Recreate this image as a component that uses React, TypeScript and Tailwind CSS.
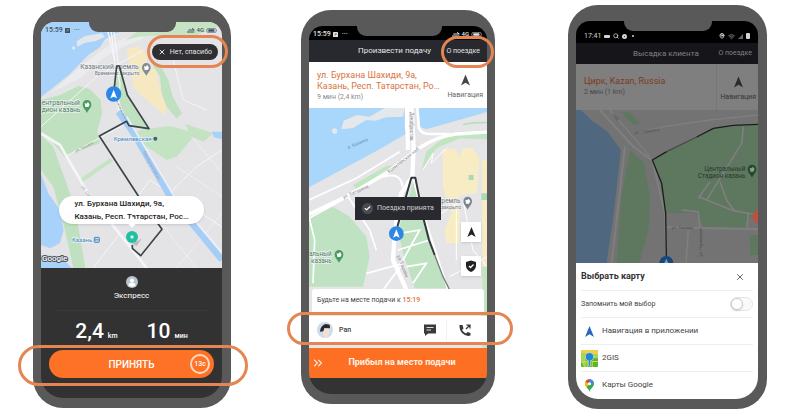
import type { ReactNode } from "react";
import { Check, X, Search, Wifi, MapPin, ChevronsRight } from "lucide-react";

const mapLabel = { fontFamily: "Roboto, 'Liberation Sans', sans-serif" };

function Phone({ className, notch, children, marks }: { className: string; notch: string; children: ReactNode; marks?: ReactNode }) {
  return (
    <section className={`relative shrink-0 rounded-[30px] bg-[#595959] pt-4 pb-[10px] pl-2 ${className}`}>
      <div className="relative flex flex-col overflow-hidden rounded-t-[14px] rounded-b-[22px]">
        {children}
        <div className={`absolute top-0 h-[10px] rounded-b-[9px] bg-[#595959] ${notch}`} />
      </div>
      {marks}
    </section>
  );
}

function Highlight({ className }: { className: string }) {
  return <div className={`pointer-events-none absolute rounded-full border-[3px] border-[#e58652] ${className}`} />;
}

function Arrow({ className }: { className: string }) {
  return (
    <svg viewBox="0 0 20 24" className={className} fill="currentColor" aria-hidden="true">
      <path d="M10 0 L20 24 L10 18 L0 24 Z" />
    </svg>
  );
}

function XiaomiStatus({ className }: { className: string }) {
  return (
    <div className={`relative flex h-[14px] items-center justify-between px-1 pt-[2px] text-[7px] leading-none font-medium ${className}`}>
      <span className="flex items-center gap-[2px]">
        15:59
        <svg viewBox="0 0 10 10" className="size-[5px]" aria-hidden="true">
          <rect width="10" height="10" rx="1" fill="currentColor" />
          <path d="M4 8V3h3v2H4" stroke="#888" strokeWidth="1.5" fill="none" />
        </svg>
        <span className="pl-[2px]">···</span>
      </span>
      <span className="flex items-center gap-[2px] text-[6px]">
        <svg viewBox="0 0 24 15" className="h-[5px] w-2" stroke="currentColor" strokeWidth="3" fill="none" aria-hidden="true">
          <path d="M0 12H22M4 6H22M15 1L22 6" />
        </svg>
        4G
        <svg viewBox="0 0 36 16" className="h-[5px] w-3" aria-hidden="true">
          <rect x="1" y="1" width="31" height="14" rx="7" fill="none" stroke="currentColor" strokeWidth="2" />
          <rect x="6" y="4" width="20" height="8" rx="2" fill="currentColor" />
        </svg>
      </span>
    </div>
  );
}

function MapPinIcon({ x, y, color, fill = "#fff" }: { x: number; y: number; color: string; fill?: string }) {
  return (
    <g transform={`translate(${x} ${y})`}>
      <path d="M0 22C-4 12 -13 8 -13 -4A13 13 0 0 1 13 -4C13 8 4 12 0 22Z" fill={color} />
      <path d="M-7 -8L-2 -6L3 -11L8 -3L4 4H-5Z" fill={fill} />
    </g>
  );
}

function OfferMap() {
  return (
    <svg viewBox="93 66 543 738" preserveAspectRatio="xMidYMid slice" className="absolute inset-0 size-full" style={mapLabel} aria-hidden="true">
      <rect x="93" y="66" width="543" height="738" fill="#e4e4e7" />
      <path d="M93 66H410L370 82L318 100L285 118L270 142L235 165L180 222L93 292Z" fill="#a9d2fa" />
      <path d="M202 140L200 124L225 108L275 100L285 110L255 124L225 128Z" fill="#e4e7ea" />
      <circle cx="191" cy="144" r="5" fill="#e4e7ea" />
      <path d="M120 280L200 210L275 150L330 120L400 100L400 115L340 140L280 175L210 235Z" fill="#ececef" />
      <path d="M345 122Q400 100 470 110L560 105L636 75V66H500L380 96Z" fill="#c6e4c4" />
      <path d="M93 300L150 285L205 258L240 268L272 300L276 340L262 395L270 430L180 462L165 472L130 430L93 400Z" fill="#bfe1bf" />
      <path d="M320 200L328 198L352 285L416 385L357 376L330 310L315 260Z" fill="#bfe1bf" />
      <path d="M350 145L385 140L412 165L408 200L440 210L445 250L470 325L462 345L440 325L400 290L372 265L360 200Z" fill="#f6e9c2" />
      <path d="M425 190L450 195L475 240L488 290L516 340L500 356L470 320L455 280L450 230Z" fill="#bfe1bf" />
      <path d="M400 388L480 378L560 400L500 470L470 480L395 430L370 400Z" fill="#c3e3c2" />
      <path d="M525 372L610 400L580 425L545 410Z" fill="#c3e3c2" />
      <path d="M605 395H636V418L612 412Z" fill="#a9d2fa" />
      <path d="M93 405L130 440L155 510L182 585L205 680L226 804H190L165 690L130 560L93 510Z" fill="#bfe1bf" />
      <path d="M93 522L115 580L150 630L161 690L150 730L120 745L93 735Z" fill="#a9d2fa" />
      <path d="M93 765L150 768L185 804H93Z" fill="#a9d2fa" />
      <path d="M205 540L300 475L310 483L215 548Z" fill="#c6e4c4" />
      <g stroke="#f5f5f8" fill="none">
        <path d="M93 400L150 435L240 590L300 665L410 804" strokeWidth="8" />
        <path d="M287 66L330 250L325 330M300 66L318 210M308 66L330 230" strokeWidth="4" />
        <path d="M165 470L340 375M385 587L420 540L635 680M470 588L560 500L636 450M230 590L330 700L250 804M93 380L260 230L400 150" strokeWidth="3" />
        <path d="M430 640L560 804M500 500L636 590M545 410L636 520M500 804L636 640" strokeWidth="2" />
        <path d="M480 140L520 300L590 330" strokeWidth="3" />
      </g>
      <path d="M325 335L372 402L480 590L636 780" stroke="#a6cdf6" strokeWidth="19" fill="none" />
      <path d="M350 350L392 420L490 585L636 758" stroke="#e6f1fb" strokeWidth="5" fill="none" />
      <path d="M320 300L335 335L350 365" stroke="#8b96a1" strokeWidth="3" strokeDasharray="7 4" fill="none" />
      <g fontSize="17" fill="#9a9a9f">
        <text transform="translate(198 458) rotate(-27)" fontSize="12">ул. Ташаяк</text>
        <text transform="translate(214 560) rotate(55)" fontSize="13">ул. Саид</text>
        <text transform="translate(398 455) rotate(61)" fontSize="12">Левобулачная ул.</text>
      </g>
      <g stroke="#eef0f2" strokeWidth="4" paintOrder="stroke" fill="#71777e" fontSize="20">
        <text x="386" y="207" textAnchor="end">Казанский кремль</text>
        <text x="388" y="224" textAnchor="end" fontSize="15">Временно закрыто</text>
        <g fill="#477d58">
          <text x="95" y="316">ентральный</text>
          <text x="95" y="337">дион казань</text>
        </g>
        <g fill="#3c8ac0">
          <text x="311" y="424" fontSize="18">Кремлевская</text>
          <text x="186" y="727" fontSize="18">Казань</text>
        </g>
      </g>
      <circle cx="436" cy="416" r="6" fill="#3f6272" />
      <rect x="253" y="712" width="15" height="15" rx="2" fill="none" stroke="#3c8ac0" strokeWidth="3" />
      <path d="M257 724V716L261 721L264 716V724" fill="none" stroke="#3c8ac0" strokeWidth="2" />
      <MapPinIcon x={409} y={206} color="#858d94" />
      <MapPinIcon x={231} y={317} color="#4a9862" />
      <path d="M313 262L320 198H328L352 285L417 386L357 377L350 364L268 408L385 588L456 688L392 767L367 745V735" stroke="#3d4348" strokeWidth="5" strokeLinejoin="round" fill="none" />
      <circle cx="311" cy="282" r="23" fill="#2b87e6" />
      <path d="M311 269L321 295L311 290L301 295Z" fill="#fff" />
      <path d="M366 731L395 716L380 738Z" fill="#b8bbbf" />
      <circle cx="366" cy="711" r="18" fill="#22bfa2" />
      <circle cx="366" cy="711" r="5" fill="#d7f7ee" />
      <text x="96" y="784" fontSize="24" fontWeight="500" fill="#fff" stroke="#4f545a" strokeWidth="6" paintOrder="stroke">Google</text>
    </svg>
  );
}

function PickupMap() {
  return (
    <svg viewBox="118 324 534 720" preserveAspectRatio="xMidYMin slice" className="absolute inset-0 size-full" style={mapLabel} aria-hidden="true">
      <rect x="118" y="324" width="534" height="720" fill="#e5e5e8" />
      <path d="M118 324H412V400L330 448L118 562Z" fill="#a9d6fb" />
      <path d="M445 324H652V336L560 362L470 388L450 380Z" fill="#a9d6fb" />
      <path d="M215 388L222 362L262 345L300 350L345 324H405L400 350L350 352L318 362L290 360L250 384Z" fill="#e5e8ea" />
      <circle cx="195" cy="393" r="8" fill="#e5e8ea" />
      <path d="M458 500L470 455L520 415L570 395L652 390V418L570 415L500 445L455 510Z" fill="#c1e4c1" />
      <path d="M250 555L350 498L372 495L262 570Z" fill="#c1e4c1" />
      <path d="M118 655L190 620L240 650L290 710L300 770L280 860H118Z" fill="#bfe3c2" />
      <path d="M430 545L405 640L385 690L400 760L435 865H540L490 760L455 640Z" fill="#bfe3c2" />
      <path d="M520 448L555 445L570 470L580 445L605 442L630 475L622 580L570 585L570 730H530L525 690L545 640L520 560Z" fill="#f7ecc3" />
      <path d="M636 480H652V1044H640Z" fill="#f7ecc3" />
      <path d="M635 580H652V600H635ZM597 525H612V540H597Z" fill="#abd9b5" />
      <path d="M638 800H652V1044H638Z" fill="#c1e4c1" />
      <g stroke="#fff" fill="none">
        <path d="M118 643L230 590L350 520L440 450Q500 408 560 402L652 396" strokeWidth="11" />
        <path d="M118 600L260 535L390 455M118 655L235 590L300 690L320 750" strokeWidth="5" />
        <path d="M443 324L448 385Q455 402 480 402H540" strokeWidth="8" fill="none" />
        <path d="M412 324V380Q415 400 415 450M425 324L432 440L428 530L395 580L375 700L370 780L415 880" strokeWidth="13" />
        <path d="M340 530Q395 515 398 560M430 530L450 610L490 730L545 900" strokeWidth="6" />
        <path d="M118 650L135 720L130 850M290 820L400 790L340 870M390 700L450 690L400 780M385 750L480 720M410 800L470 790L430 850" strokeWidth="5" />
        <path d="M460 510L490 460L485 490L530 445M580 600L610 750L652 800M500 650L560 610L560 780M540 830L652 770" strokeWidth="3" />
      </g>
      <path d="M580 374Q610 366 652 368" stroke="#b4dcb5" strokeWidth="4" fill="none" />
      <g fill="#85878b" fontSize="14">
        <text transform="translate(236 446) rotate(-22)" fontSize="13" fill="#6d90ad">р. Казанка</text>
        <text transform="translate(222 597) rotate(-25)">ул. Батурина</text>
        <text transform="translate(358 520) rotate(-38)">Кремлёвская наб.</text>
        <text transform="translate(422 336) rotate(90)">Декабристов</text>
        <text transform="translate(382 768) rotate(68)">ул. Ташаяк</text>
      </g>
      <g fontSize="19" stroke="#eef0f2" strokeWidth="4" paintOrder="stroke" fill="#74797f">
        <text x="572" y="608" textAnchor="end">кремль</text>
        <text x="574" y="626" textAnchor="end" fontSize="15">закрыто</text>
        <g fill="#477d58">
          <text x="186" y="767" textAnchor="end">альный</text>
          <text x="186" y="788" textAnchor="end">казань</text>
        </g>
      </g>
      <MapPinIcon x={594} y={607} color="#7c858d" />
      <MapPinIcon x={208} y={767} color="#4a9862" />
      <path d="M383 680L425 533H437L460 650L478 720L495 765" stroke="#33383c" strokeWidth="6" strokeLinejoin="round" fill="none" />
      <path d="M495 765L520 830L540 870" stroke="#777b7e" strokeWidth="4" fill="none" />
      <circle cx="380" cy="701" r="22" fill="#2b87e6" />
      <path d="M380 688L390 713L380 708L370 713Z" fill="#fff" />
    </svg>
  );
}

function DropoffMap() {
  return (
    <svg viewBox="78 330 546 459" preserveAspectRatio="xMidYMid slice" className="h-[153px] w-full" style={mapLabel} aria-hidden="true">
      <rect x="78" y="330" width="546" height="459" fill="#737374" />
      <path d="M78 330H92L130 365L170 392L213 450L190 650L170 789H78Z" fill="#50687f" />
      <path d="M240 450L282 490L300 590L295 690L268 789H200L215 590Z" fill="#5e775f" />
      <path d="M215 335H235L270 370L255 376L235 362Z" fill="#5e775f" />
      <path d="M307 480L350 455L440 410L490 385L624 373V650H600L590 682H460L440 637L350 640L335 550Z" fill="#5e775f" />
      <path d="M600 705H624V765H600Z" fill="#5e775f" />
      <g stroke="#7f7f80" fill="none">
        <path d="M150 330L250 440L307 482L345 640L349 789" strokeWidth="6" />
        <path d="M180 330L300 470M260 400L340 380L480 360L624 345" strokeWidth="4" />
        <path d="M225 440L185 789M350 682L624 688" strokeWidth="6" />
        <path d="M580 380L575 430L470 600L445 590L550 632L624 645M480 545L445 595M510 545L530 600L555 635M395 630L445 635L450 685M415 690L408 789M590 690L595 640" strokeWidth="5" />
      </g>
      <g fill="#4c4d4f" fontSize="13">
        <text transform="translate(188 344) rotate(55)">наб.</text>
        <text transform="translate(255 403) rotate(-8)">ул. Горького</text>
        <text x="365" y="687">ул. Ташаяк</text>
        <text transform="translate(455 770) rotate(-90)">ул. Чернышев</text>
      </g>
      <g fill="#26382b" fontSize="19" textAnchor="end">
        <text x="586" y="513">Центральный</text>
        <text x="586" y="533">Стадион казань</text>
      </g>
      <MapPinIcon x={606} y={511} color="#214a30" fill="#8d9a90" />
      <path d="M440 411L350 455" stroke="#474a48" strokeWidth="4" fill="none" />
      <path d="M624 373L550 376L490 385L440 411M350 455L307 480L335 550L347 640L349 770" stroke="#1b1d1d" strokeWidth="4" fill="none" />
      <circle cx="630" cy="650" r="22" fill="#bd5140" />
      <circle cx="349" cy="789" r="21" fill="#17487c" />
      <path d="M349 776L355 789H343Z" fill="#8297af" />
    </svg>
  );
}

function OfferPhone() {
  return (
    <Phone
      className="mt-[6px] w-[198px] pr-[9px]"
      notch="left-12 right-[46px]"
      marks={
        <>
          <Highlight className="top-[29px] right-[3px] h-[33px] w-[81px]" />
          <Highlight className="top-[339px] -right-[17px] -left-[15px] h-[41px]" />
        </>
      }
    >
      <div className="relative flex h-[246px] flex-col">
        <OfferMap />
        <XiaomiStatus className="text-[#3e5263]" />
        <button className="relative mt-2 mr-1 flex h-4 items-center gap-1 self-end rounded-full bg-[#2e2e33] px-[6px] text-[7px] leading-none text-[#e6e6e6]">
          <X className="size-2" strokeWidth={3} />
          Нет, спасибо
        </button>
        <div className="relative mx-auto mt-auto mb-11 rounded-[14px] bg-white px-[15px] py-px text-[8px] leading-[13px] font-medium text-[#222] shadow-sm">
          ул. Бурхана Шахиди, 9а,
          <br />
          Казань, Респ. Татарстан, Рос…
          <span className="absolute -bottom-[2px] left-1/2 size-2 -translate-x-1/2 rotate-45 bg-white" />
        </div>
      </div>
      <div className="flex flex-col items-center bg-[#333233] px-2 pb-5 text-white">
        <svg viewBox="0 0 24 24" className="mt-2 size-3" aria-hidden="true">
          <circle cx="12" cy="12" r="12" fill="#b6c5cc" />
          <circle cx="12" cy="9" r="4" fill="#fff" />
          <path d="M5 19Q5 13 12 13T19 19Q12 24 5 19Z" fill="#fff" />
        </svg>
        <p className="mt-[2px] text-[8px] leading-[12px]">Экспресс</p>
        <div className="mt-2 h-px w-[150px] bg-[#3b3a3b]" />
        <dl className="mt-2 flex h-6 items-baseline gap-[29px] font-medium">
          <div className="flex items-baseline gap-1">
            <dt className="text-[21px] leading-[24px]">2,4</dt>
            <dd className="text-[7px]">km</dd>
          </div>
          <div className="flex items-baseline gap-1">
            <dt className="text-[21px] leading-[24px]">10</dt>
            <dd className="text-[7px]">мин</dd>
          </div>
        </dl>
        <button className="relative mt-[7px] h-7 w-full rounded-full bg-[#fd7226] text-[10px] font-medium">
          ПРИНЯТЬ
          <span className="absolute top-1 right-1 flex size-5 items-center justify-center rounded-full border-2 border-[#ffd9bd] text-[7px]">13с</span>
        </button>
      </div>
    </Phone>
  );
}

function PickupPhone() {
  return (
    <Phone
      className="mt-[10px] mr-[3px] w-[194px] pr-2"
      notch="left-12 right-[45px]"
      marks={
        <>
          <Highlight className="top-[26px] right-px h-8 w-[53px]" />
          <Highlight className="top-[302px] -right-[18px] -left-[14px] h-[33px]" />
        </>
      }
    >
      <XiaomiStatus className="bg-black text-[#e2e2e2]" />
      <header className="flex h-[22px] items-center justify-between bg-[#28292f] pr-[7px] pl-[49px] text-[#e4e4e4]">
        <h2 className="text-[8px]">Произвести подачу</h2>
        <button className="text-[7px]">О поездке</button>
      </header>
      <div className="flex h-[46px] bg-white">
        <div className="min-w-0 flex-1 pt-2 pl-2 text-[9px] leading-[11px] whitespace-nowrap text-[#d9743e]">
          ул. Бурхана Шахиди, 9а,
          <br />
          Казань, Респ. Татарстан, Ро…
          <p className="text-[7px] leading-[10px] text-[#8b8b8b]">9 мин (2,4 km)</p>
        </div>
        <button className="mr-1 flex flex-col items-center pt-3 text-[7px] leading-[12px] text-[#666]">
          <Arrow className="mb-[3px] h-3 w-[9px] text-[#454545]" />
          Навигация
        </button>
      </div>
      <div className="relative flex h-[240px] flex-col">
        <PickupMap />
        <div role="status" className="absolute top-[89px] left-[46px] flex h-[23px] items-center gap-1 bg-[#292a30] px-[7px] text-[7px] whitespace-nowrap text-[#cfcfcf]">
          <span className="flex size-[11px] items-center justify-center rounded-full bg-[#4a4b4e]">
            <Check className="size-[7px] text-white" strokeWidth={4} />
          </span>
          Поездка принята
        </div>
        <div className="relative mt-[114px] mr-[6px] flex flex-col gap-[14px] self-end text-[#222]">
          <button aria-label="Моё местоположение" className="flex size-5 items-center justify-center bg-white shadow">
            <Arrow className="h-[10px] w-[9px]" />
          </button>
          <button aria-label="Безопасность" className="flex size-5 items-center justify-center bg-white shadow">
            <svg viewBox="0 0 24 24" className="size-3" aria-hidden="true">
              <path d="M12 1L22 4V12Q21 20 12 24Q3 20 2 12V4Z" fill="currentColor" />
              <path d="M8 12L11 15L17 9" stroke="#fff" strokeWidth="2.5" fill="none" />
            </svg>
          </button>
        </div>
        <div className="relative mx-[3px] mt-auto h-[23px] rounded-t-[3px] bg-white px-[5px] text-[7px] leading-[23px] whitespace-nowrap text-[#444]">
          Будьте на месте подачи к <b className="font-medium text-[#e2763a]">15:19</b>
        </div>
        <div className="relative mt-1 mb-1 flex h-7 items-center bg-white pr-4 pl-2 text-[#3a3a3a]">
          <svg viewBox="0 0 48 48" className="size-4" aria-hidden="true">
            <circle cx="24" cy="24" r="24" fill="#cddbec" />
            <path d="M18 24Q18 44 24 48Q34 46 38 26L32 18Z" fill="#f3dfd6" />
            <path d="M9 29Q10 11 26 6L38 8L39 19L22 18L19 28Z" fill="#25272a" />
          </svg>
          <span className="ml-[6px] text-[7px] font-medium">Pan</span>
          <button aria-label="Сообщение" className="ml-auto">
            <svg viewBox="0 0 24 24" className="size-3" aria-hidden="true">
              <path d="M0 1H24V19H8L2 24V19H0Z" fill="currentColor" />
              <path d="M5 7H19M5 12H14" stroke="#ddd" strokeWidth="2" />
            </svg>
          </button>
          <span className="ml-[10px] h-5 w-px bg-[#f1f1f1]" />
          <button aria-label="Позвонить" className="ml-3">
            <svg viewBox="0 0 24 24" className="size-3" aria-hidden="true">
              <path d="M1 2H7L9 9L6 12Q9 17 14 19L17 16L23 18V23Q14 26 6 18Q0 11 1 2Z" fill="currentColor" />
              <path d="M14 10L22 2M15 2H22V9" stroke="currentColor" strokeWidth="2.5" fill="none" />
            </svg>
          </button>
        </div>
      </div>
      <button className="flex h-[30px] items-center bg-[#fd6f22] pr-2 pl-[2px] text-[9px] font-bold whitespace-nowrap text-[#fff2e6]">
        <ChevronsRight className="size-[14px]" strokeWidth={2} />
        <span className="flex-1">Прибыл на место подачи</span>
      </button>
      <div className="h-4 bg-[#333]" />
    </Phone>
  );
}

function MapChoice({ icon, label }: { icon: ReactNode; label: string }) {
  return (
    <li className="border-t border-[#efefef]">
      <button className="flex h-[26px] w-full items-center gap-1 text-[8px] text-[#444]">
        <span className="flex w-[17px] justify-center">{icon}</span>
        {label}
      </button>
    </li>
  );
}

function DropoffPhone() {
  return (
    <Phone className="mt-[5px] w-[199px] pr-[9px]" notch="left-12 right-[46px]">
      <div className="flex h-[22px] items-center justify-between bg-black px-2 pt-2 text-[7px] leading-none text-[#d5d5d5]">
        <span className="flex items-center gap-[3px]">
          17:41
          <span className="h-[3px] w-[6px] rounded-[1px] bg-current" />
          <Search className="size-[6px]" strokeWidth={3} />
          <span className="size-[5px] rounded-full border-2" />
          <span className="ml-[2px] size-[2px] rounded-full bg-current" />
        </span>
        <span className="flex items-center gap-[3px]">
          <MapPin className="size-[6px]" strokeWidth={4} />
          <Wifi className="size-[7px] text-[#777]" strokeWidth={3} />
          <svg viewBox="0 0 10 10" className="size-[5px] text-[#666]" aria-hidden="true"><path d="M0 10H10V0Z" fill="currentColor" /></svg>
          <span className="h-[6px] w-1 rounded-[1px] bg-current" />
        </span>
      </div>
      <header className="flex h-[21px] items-center justify-between bg-[#15151a] pr-[6px] pl-[57px] text-[#818181]">
        <h2 className="text-[8px]">Высадка клиента</h2>
        <button className="text-[7px]">О поездке</button>
      </header>
      <div className="flex h-[46px] bg-[#7f7f7f]">
        <div className="flex-1 pt-3 pl-2 text-[9px] leading-[11px] text-[#7c3c20]">
          Цирк, Kazan, Russia
          <p className="text-[7px] leading-[10px] text-[#484848]">2 мин (1 km)</p>
        </div>
        <button className="flex flex-col items-center border-l border-[#777] pt-3 pr-[2px] pl-[3px] text-[7px] leading-[12px] text-[#353535]">
          <Arrow className="mb-[3px] h-3 w-[9px] text-[#2b2b2b]" />
          Навигация
        </button>
      </div>
      <DropoffMap />
      <div role="dialog" aria-labelledby="map-choice" className="relative h-[136px] bg-white px-[5px]">
        <div className="flex h-[27px] items-center justify-between pr-2">
          <h2 id="map-choice" className="text-[9px] font-bold text-[#333]">Выбрать карту</h2>
          <button aria-label="Закрыть" className="text-[#444]">
            <X className="size-[10px]" strokeWidth={2} />
          </button>
        </div>
        <div className="flex h-[27px] items-center justify-between border-t border-[#efefef]">
          <label htmlFor="remember" className="text-[7px] text-[#444]">Запомнить мой выбор</label>
          <input
            id="remember"
            type="checkbox"
            className="h-[14px] w-[23px] appearance-none rounded-full border border-[#e5e5e5] bg-[#fafafa] before:block before:size-3 before:rounded-full before:border before:border-[#ccc] before:bg-white before:shadow-sm before:content-[''] checked:before:translate-x-[9px]"
          />
        </div>
        <ul>
          <MapChoice label="Навигация в приложении" icon={<Arrow className="h-[11px] w-[9px] text-[#2668bf]" />} />
          <MapChoice
            label="2GIS"
            icon={
              <svg viewBox="0 0 50 50" className="size-[17px]" aria-hidden="true">
                <rect width="50" height="50" rx="3" fill="#56b82f" />
                <path d="M3 0H47Q50 0 50 3V14L0 10V3Q0 0 3 0Z" fill="#f1cd48" />
                <path d="M35 12H50V25L35 23ZM0 8L14 11V50H8L0 30Z" fill="#a3d65b" />
                <path d="M0 36L18 34V50M50 34H33V50" stroke="#e2d44f" strokeWidth="3" fill="none" />
                <path d="M25 48V30" stroke="#c9e7f0" strokeWidth="7" />
                <circle cx="25" cy="20" r="13" fill="#b9dcf2" />
                <circle cx="25" cy="20" r="11" fill="#2485d2" />
                <path d="M25 46V25" stroke="#2485d2" strokeWidth="4" />
              </svg>
            }
          />
          <MapChoice
            label="Карты Google"
            icon={
              <svg viewBox="0 0 24 34" className="h-[13px] w-[9px]" aria-hidden="true">
                <path d="M12 34C11 25 0 21 0 12A12 12 0 0 1 24 12C24 21 13 25 12 34Z" fill="#34a853" />
                <path d="M3 4L12 12L4 22Q0 17 0 12Q0 8 3 4Z" fill="#fbbc04" />
                <path d="M3 4Q7 0 12 0L16 1L7 11L2 6Z" fill="#ea4335" />
                <path d="M14 0Q21 2 24 9L16 13L12 12L9 8Z" fill="#4285f4" />
                <circle cx="12" cy="12" r="4" fill="#fff" />
              </svg>
            }
          />
        </ul>
      </div>
    </Phone>
  );
}

export default function App() {
  return (
    <main className="flex min-h-screen items-start justify-between overflow-hidden bg-white px-[33px] font-['Roboto','Liberation_Sans',sans-serif]">
      <OfferPhone />
      <PickupPhone />
      <DropoffPhone />
    </main>
  );
}
